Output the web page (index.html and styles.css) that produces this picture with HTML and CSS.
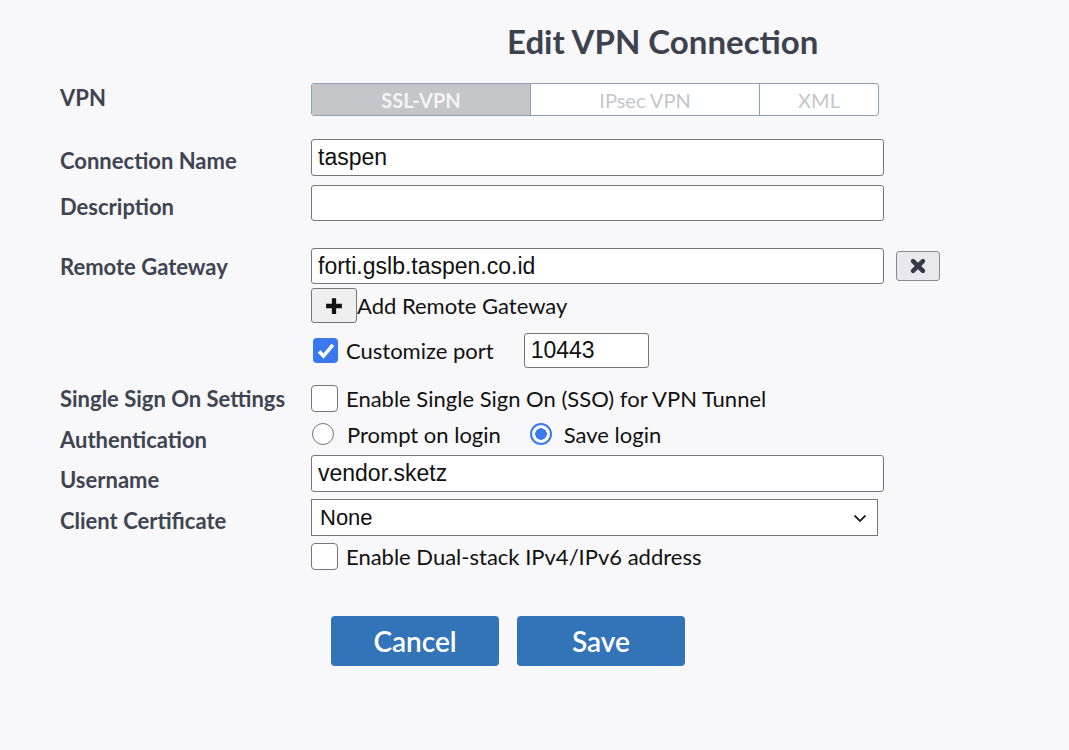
FILE: index.html
```html
<!DOCTYPE html>
<html lang="en">
  <head>
    <meta charset="UTF-8" />
    <meta name="viewport" content="width=device-width, initial-scale=1.0" />
    <title>Edit VPN Connection</title>
    <link rel="stylesheet" href="styles.css">
  </head>

  <body>
    <main class="page">
      <h1 class="title">Edit VPN Connection</h1>

      <form class="form">
        <div class="row row-vpn">
          <div class="label">VPN</div>
          <div class="tabs">
            <span class="tab active">SSL-VPN</span>
            <span class="tab tab-ipsec">IPsec VPN</span>
            <span class="tab tab-xml">XML</span>
          </div>
        </div>

        <div class="row row-name">
          <div class="label">Connection Name</div>
          <input type="text" class="field" value="taspen" />
        </div>

        <div class="row row-desc">
          <div class="label">Description</div>
          <input type="text" class="field" value="" />
        </div>

        <div class="row row-gateway">
          <div class="label">Remote Gateway</div>
          <input type="text" class="field" value="forti.gslb.taspen.co.id" />
          <button type="button" class="icon-btn remove">
            <svg width="18" height="18" viewBox="0 0 16 16">
              <path d="M3.6 3.6l8.8 8.8M12.4 3.6l-8.8 8.8" stroke="#333a47" stroke-width="4" stroke-linecap="round" />
            </svg>
          </button>
        </div>

        <div class="row row-add">
          <div class="label"></div>
          <button type="button" class="icon-btn add">
            <svg width="18" height="18" viewBox="0 0 16 16">
              <path d="M8 1v14M1 8h14" stroke="#111" stroke-width="3.8" />
            </svg>
          </button>
          <span class="option-text">Add Remote Gateway</span>
        </div>

        <div class="row row-port">
          <div class="label"></div>
          <span class="check checked">
            <svg width="22" height="22" viewBox="0 0 16 16">
              <path d="M3 8.3l3.2 3.4 6.8-8.2" stroke="#fff" stroke-width="2.6" fill="none" />
            </svg>
          </span>
          <span class="option-text">Customize port</span>
          <input type="text" class="field port" value="10443" />
        </div>

        <div class="row row-sso">
          <div class="label">Single Sign On Settings</div>
          <span class="check"></span>
          <span class="option-text">Enable Single Sign On (SSO) for VPN Tunnel</span>
        </div>

        <div class="row row-auth">
          <div class="label">Authentication</div>
          <span class="radio"></span>
          <span class="option-text">Prompt on login</span>
          <span class="radio selected"></span>
          <span class="option-text">Save login</span>
        </div>

        <div class="row row-user">
          <div class="label">Username</div>
          <input type="text" class="field" value="vendor.sketz" />
        </div>

        <div class="row row-cert">
          <div class="label">Client Certificate</div>
          <div class="select">
            <span>None</span>
            <svg width="16" height="16" viewBox="0 0 16 16">
              <path d="M2.5 5.5l5.5 5.5 5.5-5.5" stroke="#222" stroke-width="1.8" fill="none" />
            </svg>
          </div>
        </div>

        <div class="row row-dual">
          <div class="label"></div>
          <span class="check"></span>
          <span class="option-text">Enable Dual-stack IPv4/IPv6 address</span>
        </div>

        <div class="actions">
          <button type="button" class="btn">Cancel</button>
          <button type="button" class="btn">Save</button>
        </div>
      </form>
    </main>
  </body>
</html>
```

FILE: styles.css
```css
* {
  box-sizing: border-box;
  margin: 0;
  padding: 0;
}

body {
  background: #f8f8fa;
  font-family: Lato, "Open Sans", sans-serif;
  color: #111;
}

.page {
  padding: 22px 0 0 60px;
}

.title {
  padding-left: 447px;
  font-size: 33px;
  font-weight: 700;
  line-height: 39px;
  color: #3c424e;
}

.form {
  display: flex;
  flex-direction: column;
}

.row {
  display: flex;
  align-items: center;
}

.label {
  width: 251px;
  flex-shrink: 0;
  padding-top: 6px;
  font-size: 22px;
  font-weight: 700;
  color: #3e4451;
}

/* vertical rhythm of the form rows */
.row-vpn { margin-top: 22px; height: 33px; }
.row-name { margin-top: 23px; height: 37px; }
.row-desc { margin-top: 9px; height: 36px; }
.row-gateway { margin-top: 27px; height: 36px; }
.row-add { margin-top: 4px; height: 35px; }
.row-port { margin-top: 10px; height: 35px; }
.row-sso { margin-top: 17px; height: 26px; }
.row-auth { margin-top: 12px; height: 22px; }
.row-user { margin-top: 10px; height: 37px; }
.row-cert { margin-top: 7px; height: 37px; }
.row-dual { margin-top: 7px; height: 27px; }

.row-vpn .label { padding-top: 0; padding-bottom: 5px; }
.row-gateway .label { padding-top: 1px; }
.row-sso .label { padding-top: 0; }
.row-auth .label { padding-top: 10px; }
.row-user .label { padding-top: 12px; }

.tabs {
  display: flex;
  width: 568px;
  height: 33px;
  border: 1px solid #8d9fb4;
  border-radius: 3px;
  overflow: hidden;
  background: #fff;
}

.tab {
  display: flex;
  align-items: center;
  justify-content: center;
  width: 218px;
  font-size: 20px;
  font-weight: 700;
  color: #c4c6ca;
}

.tab.active {
  background: #c4c6c9;
  color: #f4f4f5;
}

.tab-ipsec {
  width: 230px;
  border-left: 1px solid #8d9fb4;
  border-right: 1px solid #8d9fb4;
  font-weight: 400;
}

.tab-xml {
  flex: 1;
  font-weight: 400;
}

.field {
  width: 573px;
  height: 100%;
  padding: 0 6px;
  background: #fff;
  border: 1px solid #767676;
  border-radius: 3px;
  font-family: "Liberation Sans", Arial, sans-serif;
  font-size: 23px;
  color: #111;
}

.field.port {
  width: 125px;
  margin-left: 30px;
}

.icon-btn {
  display: flex;
  align-items: center;
  justify-content: center;
  background: #efeff1;
  border: 1px solid #8a8a8a;
  border-radius: 3px;
}

.icon-btn.remove {
  width: 44px;
  height: 30px;
  margin-left: 12px;
  background: #e9e9ed;
}

.icon-btn.add {
  width: 46px;
  height: 35px;
  background: #efefef;
  border-color: #767676;
}

.option-text {
  font-size: 22px;
  color: #111;
}

.check {
  display: flex;
  align-items: center;
  justify-content: center;
  width: 27px;
  height: 27px;
  margin-right: 8px;
  background: #fff;
  border: 1.5px solid #767676;
  border-radius: 4px;
}

.check.checked {
  width: 25px;
  height: 25px;
  margin-left: 2px;
  background: #3a78ee;
  border: none;
}

.radio {
  width: 22px;
  height: 22px;
  margin: 0 13px 0 1px;
  background: #fff;
  border: 1.5px solid #767676;
  border-radius: 50%;
}

.option-text + .radio {
  margin-left: 29px;
  margin-right: 12px;
}

.radio.selected {
  border: 2px solid #3a78ee;
  background: radial-gradient(circle, #3a78ee 0 5.5px, #fff 6px);
}

.select {
  display: flex;
  align-items: center;
  justify-content: space-between;
  width: 567px;
  height: 100%;
  padding: 0 9px 0 8px;
  background: #fff;
  border: 1px solid #767676;
  font-family: "Liberation Sans", Arial, sans-serif;
  font-size: 22px;
  color: #111;
}

.actions {
  display: flex;
  gap: 18px;
  margin: 46px 0 0 271px;
}

.btn {
  width: 168px;
  height: 50px;
  background: #3374b8;
  border: none;
  border-radius: 4px;
  font-family: Lato, sans-serif;
  font-size: 28px;
  font-weight: 600;
  color: #fff;
}
```
